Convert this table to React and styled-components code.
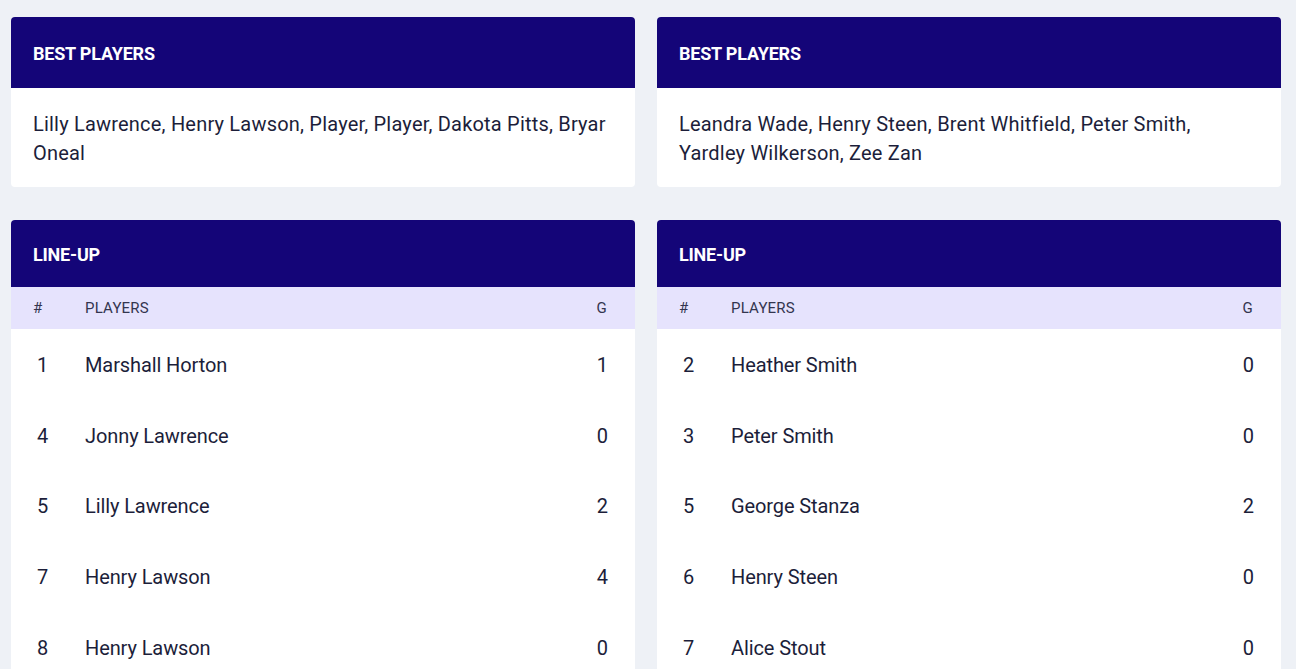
import React from "react";
import styled, { createGlobalStyle } from "styled-components";

const Global = createGlobalStyle`
  html, body { margin: 0; padding: 0; background: #eef1f6; }
  body { font-family: Roboto, "Liberation Sans", sans-serif; color: #1c1e3a; }
  * { box-sizing: border-box; }
`;

const Page = styled.div`
  display: grid;
  grid-template-columns: 624px 624px;
  column-gap: 22px;
  row-gap: 33px;
  padding: 17px 15px 0 11px;
  align-items: start;
`;

const Card = styled.section`
  background: #ffffff;
  border-radius: 4px;
  overflow: hidden;
  grid-row: ${(p) => p.$row};
  grid-column: ${(p) => p.$col};
`;

const CardHeader = styled.header`
  background: #140578;
  color: #ffffff;
  height: ${(p) => (p.$tall ? "71px" : "67px")};
  display: flex;
  align-items: center;
  padding: 2px 22px 0;
  font-weight: 700;
  font-size: 18px;
  letter-spacing: -0.2px;
  text-transform: uppercase;
`;

const CardBody = styled.div`
  padding: 22px 26px 19px 22px;
  font-size: 20px;
  line-height: 29px;
  letter-spacing: 0.2px;
  min-height: 99px;
`;

const Table = styled.table`
  width: 100%;
  border-collapse: collapse;
`;

const HeadRow = styled.tr`
  background: #e6e3fd;
  height: 42px;
`;

const Th = styled.th`
  font-weight: 400;
  font-size: 15px;
  color: #33354f;
  text-align: ${(p) => p.$align || "left"};
  padding: ${(p) => p.$pad || "0"};
  width: ${(p) => p.$w || "auto"};
  letter-spacing: 0.2px;
`;

const Row = styled.tr`
  height: 70.6px;
`;

const Td = styled.td`
  font-size: 20px;
  text-align: ${(p) => p.$align || "left"};
  padding: ${(p) => p.$pad || "0"};
  padding-top: 2px;
  letter-spacing: -0.1px;
`;

const teams = [
  {
    best: "Lilly Lawrence, Henry Lawson, Player, Player, Dakota Pitts, Bryar Oneal",
    lineup: [
      [1, "Marshall Horton", 1],
      [4, "Jonny Lawrence", 0],
      [5, "Lilly Lawrence", 2],
      [7, "Henry Lawson", 4],
      [8, "Henry Lawson", 0],
    ],
  },
  {
    best: "Leandra Wade, Henry Steen, Brent Whitfield, Peter Smith, Yardley Wilkerson, Zee Zan",
    lineup: [
      [2, "Heather Smith", 0],
      [3, "Peter Smith", 0],
      [5, "George Stanza", 2],
      [6, "Henry Steen", 0],
      [7, "Alice Stout", 0],
    ],
  },
];

export default function App() {
  return (
    <>
      <Global />
      <Page>
        {teams.map((t, i) => (
          <Card key={"b" + i} $row={1} $col={i + 1}>
            <CardHeader $tall>Best Players</CardHeader>
            <CardBody>{t.best}</CardBody>
          </Card>
        ))}
        {teams.map((t, i) => (
          <Card key={"l" + i} $row={2} $col={i + 1}>
            <CardHeader>Line-up</CardHeader>
            <Table>
              <thead>
                <HeadRow>
                  <Th $w="74px" $pad="0 0 0 22px">#</Th>
                  <Th>PLAYERS</Th>
                  <Th $align="right" $pad="0 28px 0 0">G</Th>
                </HeadRow>
              </thead>
              <tbody>
                {t.lineup.map((r, j) => (
                  <Row key={j}>
                    <Td $pad="0 0 0 26px">{r[0]}</Td>
                    <Td>{r[1]}</Td>
                    <Td $align="right" $pad="0 27px 0 0">{r[2]}</Td>
                  </Row>
                ))}
              </tbody>
            </Table>
          </Card>
        ))}
      </Page>
    </>
  );
}
